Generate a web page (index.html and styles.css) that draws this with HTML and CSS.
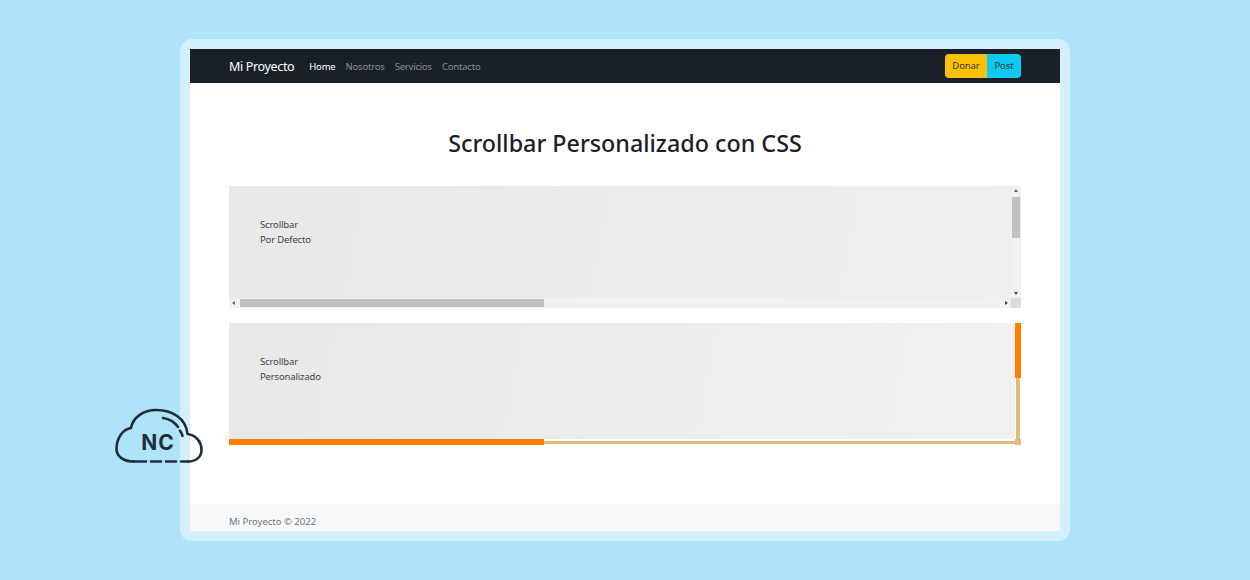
FILE: index.html

```html
<!DOCTYPE HTML>
<html>
<head>
  <meta charset="UTF-8">
  <title>Scrollbar Personalizado</title>
  <link rel="stylesheet" href="styles.css">
</head>
<body>
  <div class="frame">
    <!--barra de navegacion-->
    <nav class="navbar">
      <a class="brand" href="#">Mi Proyecto</a>
      <ul class="nav-links">
        <li class="active">Home</li>
        <li>Nosotros</li>
        <li>Servicios</li>
        <li>Contacto</li>
      </ul>
      <div class="btn-group">
        <a class="btn btn-donar" href="#">Donar</a>
        <a class="btn btn-post" href="#">Post</a>
      </div>
    </nav>

    <main class="content">
      <h1 class="title">Scrollbar Personalizado con CSS</h1>

      <!--scrollbar por defecto-->
      <section class="scroll-box default">
        <div class="scroll-text">Scrollbar<br>Por Defecto</div>
        <div class="vbar">
          <span class="arrow arrow-up"></span>
          <span class="vthumb"></span>
          <span class="arrow arrow-down"></span>
        </div>
        <div class="hbar">
          <span class="arrow arrow-left"></span>
          <span class="hthumb"></span>
          <span class="arrow arrow-right"></span>
        </div>
        <div class="corner"></div>
      </section>

      <!--scrollbar personalizado-->
      <section class="scroll-box custom">
        <div class="scroll-text">Scrollbar<br>Personalizado</div>
        <div class="vbar"><span class="vthumb"></span></div>
        <div class="hbar"><span class="hthumb"></span></div>
        <div class="corner"></div>
      </section>
    </main>

    <footer class="footer">Mi Proyecto © 2022</footer>
  </div>

  <!--logo-->
  <div class="logo">
    <svg width="90" height="58" viewBox="0 0 90 58" fill="none" stroke="#1f2d3a" stroke-width="2.6" stroke-linecap="round" stroke-linejoin="round">
      <path d="M20 53.500C9 53.500 2.500 48 2.500 41C2.500 30 9 21 17 20C19 9 30 2 42 2C58 2 72 10 73.500 26C81 27 87.500 33 87.500 42C87.500 49 82 53.500 74 53.500"/>
      <path d="M49 10C56 11 60.500 14 64 19"/>
      <path d="M66 22.500C67 24 68 26 68.500 28"/>
      <path d="M20 53.500H32M37 53.500H47M52 53.500H62M67 53.500H74"/>
      <text x="44" y="42" text-anchor="middle" class="logo-text">NC</text>
    </svg>
  </div>
</body>
</html>
```

FILE: styles.css

```css
body,h1,ul,li{margin:0;padding:0;list-style:none;}
body{
  height: 580px;
  overflow: hidden;
  padding-top: 39px;
  box-sizing: border-box;
  background-color: #aee3f9;
  font-family: "Noto Sans","Open Sans",sans-serif;
  color: #1a2027;
}
a{text-decoration: none;}

.frame{
  display: flex;
  flex-direction: column;
  width: 870px;
  height: 482px;
  margin-left: 180px;
  padding: 10px;
  border-radius: 12px;
  background-color: #d4f0fc;
}

.navbar{
  display: flex;
  align-items: center;
  height: 34px;
  padding: 0 39px;
  box-sizing: border-box;
  background-color: #1a2027;
}
.brand{
  margin-right: 15px;
  font-size: 12.5px;
  letter-spacing: -.35px;
  color: #fff;
}
.nav-links{
  display: flex;
  gap: 10px;
  font-size: 9.5px;
  letter-spacing: -.2px;
  color: #8b8f93;
}
.nav-links .active{color: #fff;}
.btn-group{
  display: flex;
  margin-left: auto;
  border-radius: 4px;
  overflow: hidden;
}
.btn{
  height: 24px;
  line-height: 24px;
  text-align: center;
  font-size: 9.5px;
  letter-spacing: -.1px;
  color: #333;
}
.btn-donar{width: 42px;background-color: #ffc107;}
.btn-post{width: 34px;background-color: #0dcaf0;}

.content{
  flex: 1;
  padding: 45px 39px 0;
  background-color: #fff;
}
.title{
  margin-bottom: 27px;
  line-height: 31px;
  text-align: center;
  font-size: 23.3px;
  font-weight: 500;
}

.scroll-box{
  display: grid;
  height: 122px;
  margin-bottom: 15px;
  background-image: linear-gradient(100deg,#e9e8e8,#f0eff0);
}
.default{grid-template: 1fr 10px / 1fr 10px;}
.custom{
  grid-template: 1fr 6px / 1fr 6px;
  background-image: linear-gradient(100deg,#e9e8e8,#f2f0f1);
}
.scroll-text{
  padding: 31px;
  font-size: 9.5px;
  line-height: 15px;
  letter-spacing: -.15px;
  color: #444;
}

.vbar,.hbar{display: flex;align-items: center;}
.vbar{flex-direction: column;}
.default .vbar,.default .hbar{background-color: #f1f1f1;}
.default .vthumb{
  width: 8px;
  height: 41px;
  margin-top: 5px;
  background-color: #c1c1c1;
}
.default .hthumb{
  width: 304px;
  height: 8px;
  margin-left: 5px;
  background-color: #c1c1c1;
}
.default .corner{background-color: #dcdcdc;}

.arrow{width: 0;height: 0;border: 2px solid transparent;}
.arrow-up{margin-top: 3px;border-top: 0;border-bottom: 3px solid #666;}
.arrow-down{margin-top: auto;margin-bottom: 3px;border-bottom: 0;border-top: 3px solid #444;}
.arrow-left{margin-left: 3px;border-left: 0;border-right: 3px solid #666;}
.arrow-right{margin-left: auto;margin-right: 3px;border-right: 0;border-left: 3px solid #444;}

.custom .vbar,.custom .hbar{background-color: #fff;}
.custom .vbar{
  background-image: linear-gradient(90deg,#fff 1px,#e0bd75 1px,#e0bd75 5px,#fff 5px);
}
.custom .hbar{
  background-image: linear-gradient(#fff 2px,#e0bd75 2px,#e0bd75 5px,#fff 5px);
}
.custom .vthumb{width: 6px;height: 55px;background-color: #ff8000;}
.custom .hthumb{width: 315px;height: 6px;background-color: #ff8000;}
.custom .corner{background-color: #e0bd75;}

.footer{
  height: 27px;
  padding: 0 39px;
  box-sizing: border-box;
  line-height: 36px;
  font-size: 9.5px;
  color: #6c757d;
  background-color: #f8f9fa;
}

.logo{
  position: absolute;
  left: 114px;
  top: 408px;
  line-height: 0;
}
.logo-text{
  font-family: "Inter","Liberation Sans",sans-serif;
  font-size: 21px;
  font-weight: 700;
  letter-spacing: 1px;
  fill: #1f2d3a;
  stroke: none;
}
```
